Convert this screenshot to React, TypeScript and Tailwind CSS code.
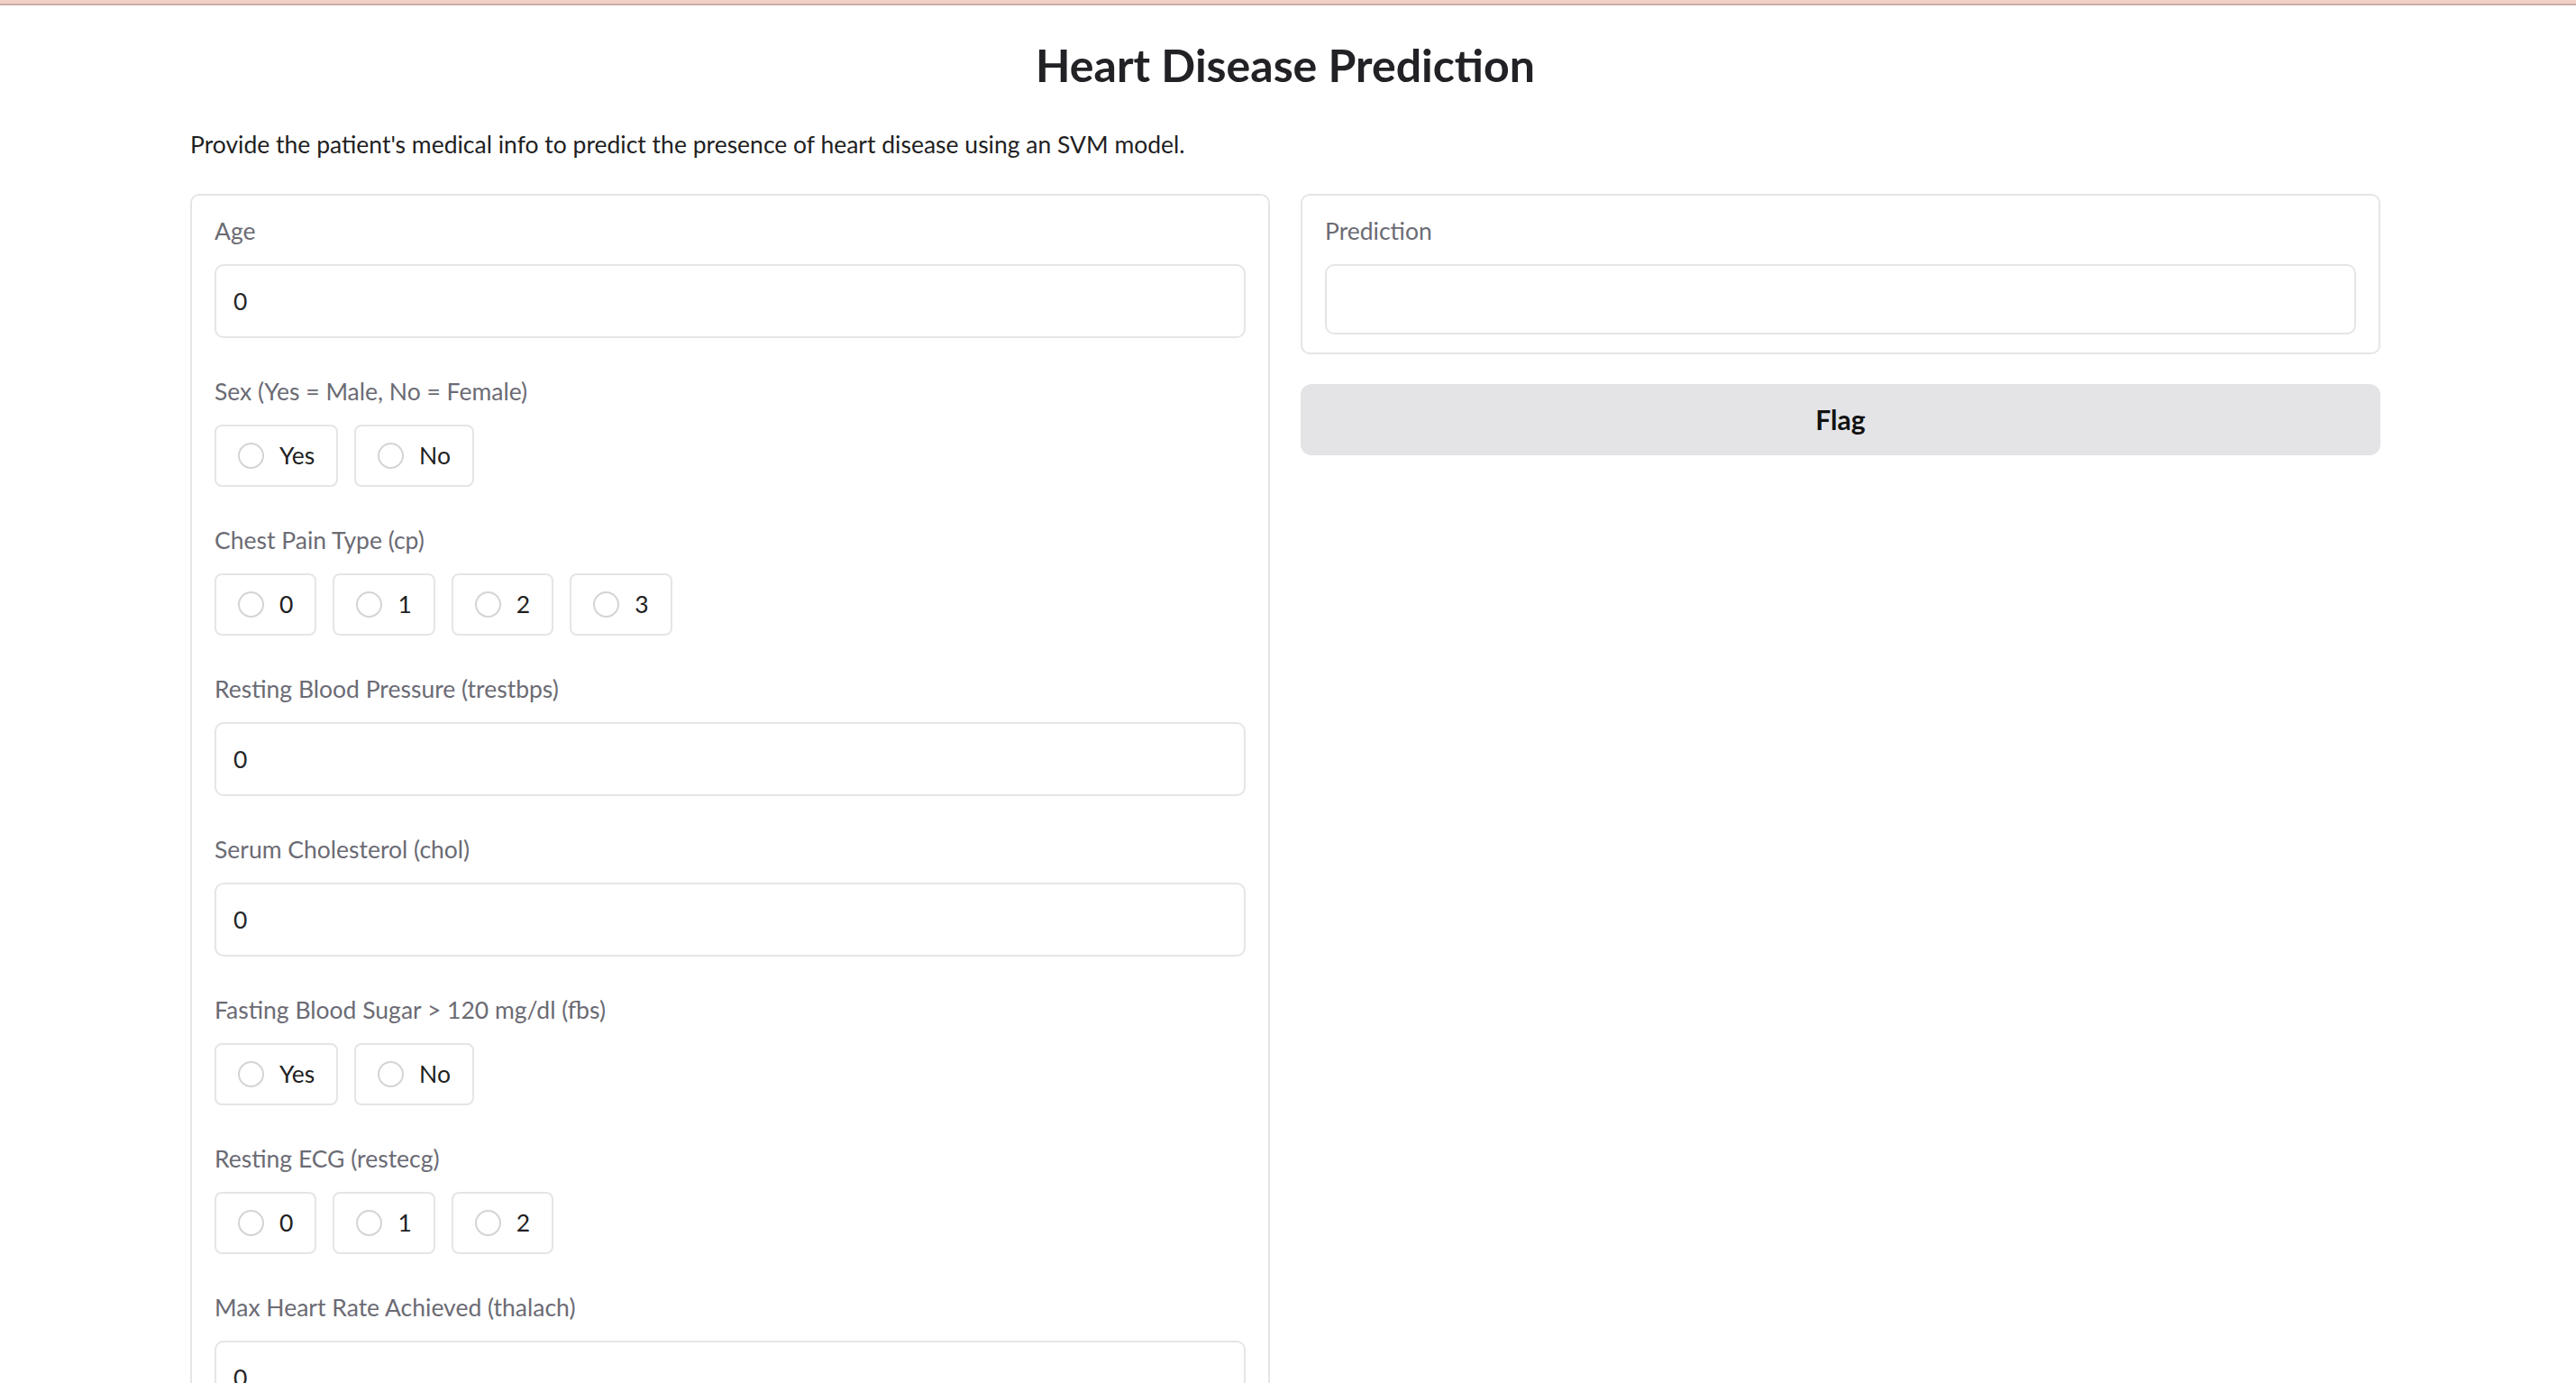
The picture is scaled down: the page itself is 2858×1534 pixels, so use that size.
import { useState } from "react";

type Field =
  | { kind: "number"; label: string }
  | { kind: "radio"; label: string; options: string[] };

const fields: Field[] = [
  { kind: "number", label: "Age" },
  { kind: "radio", label: "Sex (Yes = Male, No = Female)", options: ["Yes", "No"] },
  { kind: "radio", label: "Chest Pain Type (cp)", options: ["0", "1", "2", "3"] },
  { kind: "number", label: "Resting Blood Pressure (trestbps)" },
  { kind: "number", label: "Serum Cholesterol (chol)" },
  { kind: "radio", label: "Fasting Blood Sugar > 120 mg/dl (fbs)", options: ["Yes", "No"] },
  { kind: "radio", label: "Resting ECG (restecg)", options: ["0", "1", "2"] },
  { kind: "number", label: "Max Heart Rate Achieved (thalach)" },
  { kind: "radio", label: "Exercise Induced Angina (exang)", options: ["Yes", "No"] },
  { kind: "number", label: "ST Depression (oldpeak)" },
  { kind: "radio", label: "Slope of Peak Exercise ST (slope)", options: ["0", "1", "2"] },
  { kind: "radio", label: "Major Vessels Colored (ca)", options: ["0", "1", "2", "3", "4"] },
  { kind: "radio", label: "Thalassemia (thal)", options: ["0", "1", "2", "3"] },
];

function Label({ text }: { text: string }) {
  return <div className="h-[40px] leading-[40px] text-[26.5px] text-[#6b6b74] mb-[17px]">{text}</div>;
}

function NumberField({ label }: { label: string }) {
  const [val, setVal] = useState("0");
  return (
    <div className="px-[25px] pt-[19px] pb-[20px]">
      <Label text={label} />
      <input
        value={val}
        onChange={(e) => setVal(e.target.value)}
        className="w-full h-[82px] border-2 border-[#e5e5e7] rounded-[10px] px-[19px] text-[26.5px] text-[#27272a] outline-none"
      />
    </div>
  );
}

function RadioField({ label, options }: { label: string; options: string[] }) {
  const [sel, setSel] = useState<string | null>(null);
  return (
    <div className="px-[25px] pt-[19px] pb-[20px]">
      <Label text={label} />
      <div className="flex gap-[18px]">
        {options.map((o) => (
          <button
            key={o}
            onClick={() => setSel(o)}
            className="flex items-center gap-[17px] h-[69px] px-[24px] border-2 border-[#e5e5e7] rounded-[8px] bg-white"
          >
            <span
              className={
                sel === o
                  ? "w-[29px] h-[29px] rounded-full border-[9px] border-[#f97316]"
                  : "w-[29px] h-[29px] rounded-full border-2 border-[#d4d4d8]"
              }
            />
            <span className="text-[26.5px] text-[#1f1f23]">{o}</span>
          </button>
        ))}
      </div>
    </div>
  );
}

export default function App() {
  return (
    <div className="min-h-screen bg-white font-['Lato',sans-serif]">
      <div className="h-[4px] bg-[#f1d1c6]" />
      <div className="h-[2px] bg-[#c9aea5]" />

      <div className="w-[2430px] ml-[211px]">
        <h1 className="mt-[36px] h-[60px] leading-[60px] text-center text-[50px] font-bold text-[#222226]">
          Heart Disease Prediction
        </h1>
        <p className="mt-[38px] h-[40px] leading-[40px] text-[26.5px] text-[#1f1f23]">
          Provide the patient's medical info to predict the presence of heart disease using an SVM model.
        </p>

        <div className="grid grid-cols-2 gap-[34px] items-start mt-[35px]">
          <div className="border-2 border-[#e5e5e7] rounded-[10px]">
            {fields.map((f) =>
              f.kind === "number" ? (
                <NumberField key={f.label} label={f.label} />
              ) : (
                <RadioField key={f.label} label={f.label} options={f.options} />
              )
            )}
          </div>

          <div className="flex flex-col gap-[33px]">
            <div className="border-2 border-[#e5e5e7] rounded-[10px] px-[25px] pt-[19px] pb-[20px]">
              <Label text="Prediction" />
              <div className="h-[78px] border-2 border-[#e5e5e7] rounded-[10px]" />
            </div>
            <button className="h-[79px] rounded-[12px] bg-[#e4e4e7] text-[30px] font-bold text-[#111111]">
              Flag
            </button>
          </div>
        </div>
      </div>
    </div>
  );
}
